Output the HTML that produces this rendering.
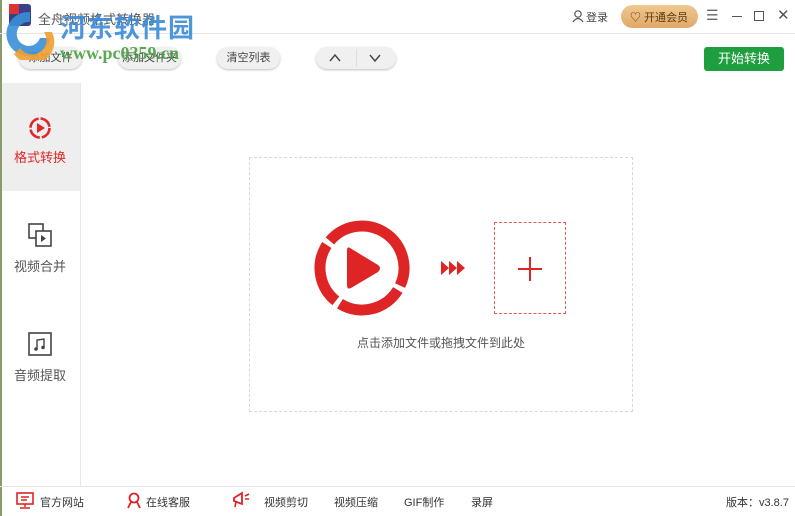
<!DOCTYPE html>
<html><head><meta charset="utf-8"><style>
*{margin:0;padding:0;box-sizing:border-box}
body{width:795px;height:516px;overflow:hidden;background:#fff;font-family:"Liberation Sans","Noto Sans CJK SC",sans-serif;position:relative;color:#333}
.abs{position:absolute}
.btn{position:absolute;top:47px;height:22px;border-radius:11px;background:#f0f0f0;box-shadow:0 1px 2px rgba(0,0,0,.25);font-size:11px;color:#444;text-align:center;line-height:22px}
.side{position:absolute;left:0;width:80px;text-align:center;font-size:13px;color:#555}
.ft{position:absolute;top:494px;font-size:11px;color:#333}
</style></head><body>
<div class="abs" style="left:0;top:0;width:2px;height:516px;background:#8a9a6a"></div>
<!-- title bar -->
<div class="abs" style="left:9px;top:4px;width:22px;height:22px;background:#3a3f8a;border-radius:3px"></div>
<div class="abs" style="left:9px;top:4px;width:10px;height:10px;background:#d33"></div>
<div class="abs" style="left:38px;top:9px;font-size:13px;color:#555">全舟视频格式转换器</div>
<div class="abs" style="left:0;top:33px;width:795px;height:1px;background:#e6e6e6"></div>
<!-- right title -->
<svg class="abs" style="left:572px;top:10px" width="12" height="13"><circle cx="6" cy="4" r="3.2" fill="none" stroke="#555" stroke-width="1.2"/><path d="M1 12 Q6 5 11 12" fill="none" stroke="#555" stroke-width="1.2"/></svg>
<div class="abs" style="left:586px;top:9px;font-size:11px;color:#444">登录</div>
<div class="abs" style="left:621px;top:5px;width:77px;height:23px;border-radius:12px;background:linear-gradient(#f0c890,#e0a868)"></div>
<div class="abs" style="left:630px;top:9px;font-size:11px;color:#5a3a10">♡ 开通会员</div>
<div class="abs" style="left:706px;top:7px;font-size:14px;color:#666">☰</div>
<div class="abs" style="left:732px;top:16px;width:10px;height:1px;background:#555"></div>
<div class="abs" style="left:754px;top:11px;width:10px;height:10px;border:1.3px solid #555"></div>
<div class="abs" style="left:777px;top:6px;font-size:15px;color:#555">✕</div>
<!-- toolbar -->
<div class="btn" style="left:19px;width:63px">添加文件</div>
<div class="btn" style="left:118px;width:63px">添加文件夹</div>
<div class="btn" style="left:217px;width:63px">清空列表</div>
<div class="btn" style="left:316px;width:80px"></div>
<div class="abs" style="left:356px;top:49px;width:1px;height:18px;background:#ddd"></div>
<svg class="abs" style="left:329px;top:52px" width="60" height="12"><path d="M1 9 L6 3 L11 9" fill="none" stroke="#444" stroke-width="1.4"/><path d="M41 3 L46 9 L51 3" fill="none" stroke="#444" stroke-width="1.4"/></svg>
<div class="abs" style="left:704px;top:47px;width:80px;height:24px;background:#1f9e3f;border-radius:3px;color:#fff;font-size:13px;text-align:center;line-height:24px">开始转换</div>
<!-- watermark (on top) -->
<svg class="abs" style="left:0;top:8px;z-index:5" width="60" height="52"><path d="M30 4 A22 22 0 1 0 50 30 L40 30 A12 12 0 1 1 30 14Z" fill="#3a8fd6" opacity=".9"/><path d="M14 46 A22 22 0 0 0 52 24 L44 24 A14 14 0 0 1 20 40Z" fill="#f0a030" opacity=".9"/></svg>
<div class="abs" style="left:60px;top:8px;z-index:5;font-size:26px;font-weight:bold;color:#3b8bd8;letter-spacing:1px;opacity:.9">河东软件园</div>
<div class="abs" style="left:60px;top:43px;z-index:5;font-size:18px;font-weight:bold;color:#4aa040;font-family:'Liberation Serif',serif;opacity:.9">www.pc0359.cn</div>
<!-- sidebar -->
<div class="abs" style="left:80px;top:83px;width:1px;height:403px;background:#e8e8e8"></div>
<div class="abs" style="left:2px;top:83px;width:78px;height:108px;background:#eeeeee"></div>
<svg class="abs" style="left:28px;top:116px" width="24" height="24"><circle cx="12" cy="12" r="9.5" fill="none" stroke="#e02828" stroke-width="2.6" stroke-dasharray="13 2"/><path d="M9 7 L17 12 L9 17Z" fill="#e02828"/></svg>
<div class="side" style="top:147px;color:#e02828">格式转换</div>
<svg class="abs" style="left:28px;top:223px" width="26" height="26"><rect x="1" y="1" width="14" height="14" fill="none" stroke="#444" stroke-width="1.6"/><rect x="8" y="8" width="15" height="15" fill="#fff" stroke="#444" stroke-width="1.6"/><path d="M13 12 L18 15.5 L13 19Z" fill="#444"/></svg>
<div class="side" style="top:256px">视频合并</div>
<svg class="abs" style="left:28px;top:332px" width="24" height="24"><rect x="1" y="1" width="22" height="22" fill="none" stroke="#444" stroke-width="1.6"/><path d="M9 17 V8 L16 7 V15" fill="none" stroke="#444" stroke-width="1.4"/><circle cx="8" cy="17" r="1.8" fill="#444"/><circle cx="15" cy="15.5" r="1.8" fill="#444"/></svg>
<div class="side" style="top:365px">音频提取</div>
<!-- drop zone -->
<div class="abs" style="left:249px;top:157px;width:384px;height:255px;border:1px dashed #d8d8d8"></div>
<svg class="abs" style="left:312px;top:218px" width="100" height="100"><circle cx="50" cy="50" r="42" fill="none" stroke="#de2424" stroke-width="11" stroke-dasharray="62 5 66 5 62 5 66 5" transform="rotate(-60 50 50)"/><path d="M38 30 Q35 28 35 33 V67 Q35 72 39 70 L66 54 Q70 50 66 47Z" fill="#de2424"/></svg>
<svg class="abs" style="left:441px;top:261px" width="26" height="14"><path d="M0 0 L8 7 L0 14Z M8 0 L16 7 L8 14Z M16 0 L24 7 L16 14Z" fill="#de2424"/></svg>
<div class="abs" style="left:494px;top:222px;width:72px;height:92px;border:1px dashed #e05a5a"></div>
<div class="abs" style="left:518px;top:268px;width:24px;height:1.5px;background:#de2424"></div>
<div class="abs" style="left:529px;top:257px;width:1.5px;height:24px;background:#de2424"></div>
<div class="abs" style="left:249px;top:334px;width:384px;text-align:center;font-size:12px;color:#555">点击添加文件或拖拽文件到此处</div>
<!-- footer -->
<div class="abs" style="left:0;top:486px;width:795px;height:1px;background:#e6e6e6"></div>
<svg class="abs" style="left:16px;top:492px" width="18" height="17"><rect x="1" y="1" width="16" height="11" fill="none" stroke="#de2424" stroke-width="1.6"/><path d="M5 5 H13 M5 8 H11 M9 12 V15 M4 16 H14" stroke="#de2424" stroke-width="1.5"/></svg>
<div class="ft" style="left:40px">官方网站</div>
<svg class="abs" style="left:126px;top:492px" width="16" height="17"><circle cx="8" cy="6" r="4.5" fill="none" stroke="#de2424" stroke-width="1.8"/><path d="M2 16 L5 10 M14 16 L11 10" stroke="#de2424" stroke-width="1.8"/></svg>
<div class="ft" style="left:146px">在线客服</div>
<svg class="abs" style="left:231px;top:490px" width="20" height="18"><path d="M3 8 L11 3 V14 L3 11Z" fill="none" stroke="#de2424" stroke-width="1.8"/><path d="M14 6 L18 4 M14 9 H18 M5 12 L4 17" stroke="#de2424" stroke-width="1.6"/></svg>
<div class="ft" style="left:264px">视频剪切</div>
<div class="ft" style="left:334px">视频压缩</div>
<div class="ft" style="left:404px">GIF制作</div>
<div class="ft" style="left:471px">录屏</div>
<div class="ft" style="left:726px">版本：v3.8.7</div>
</body></html>
